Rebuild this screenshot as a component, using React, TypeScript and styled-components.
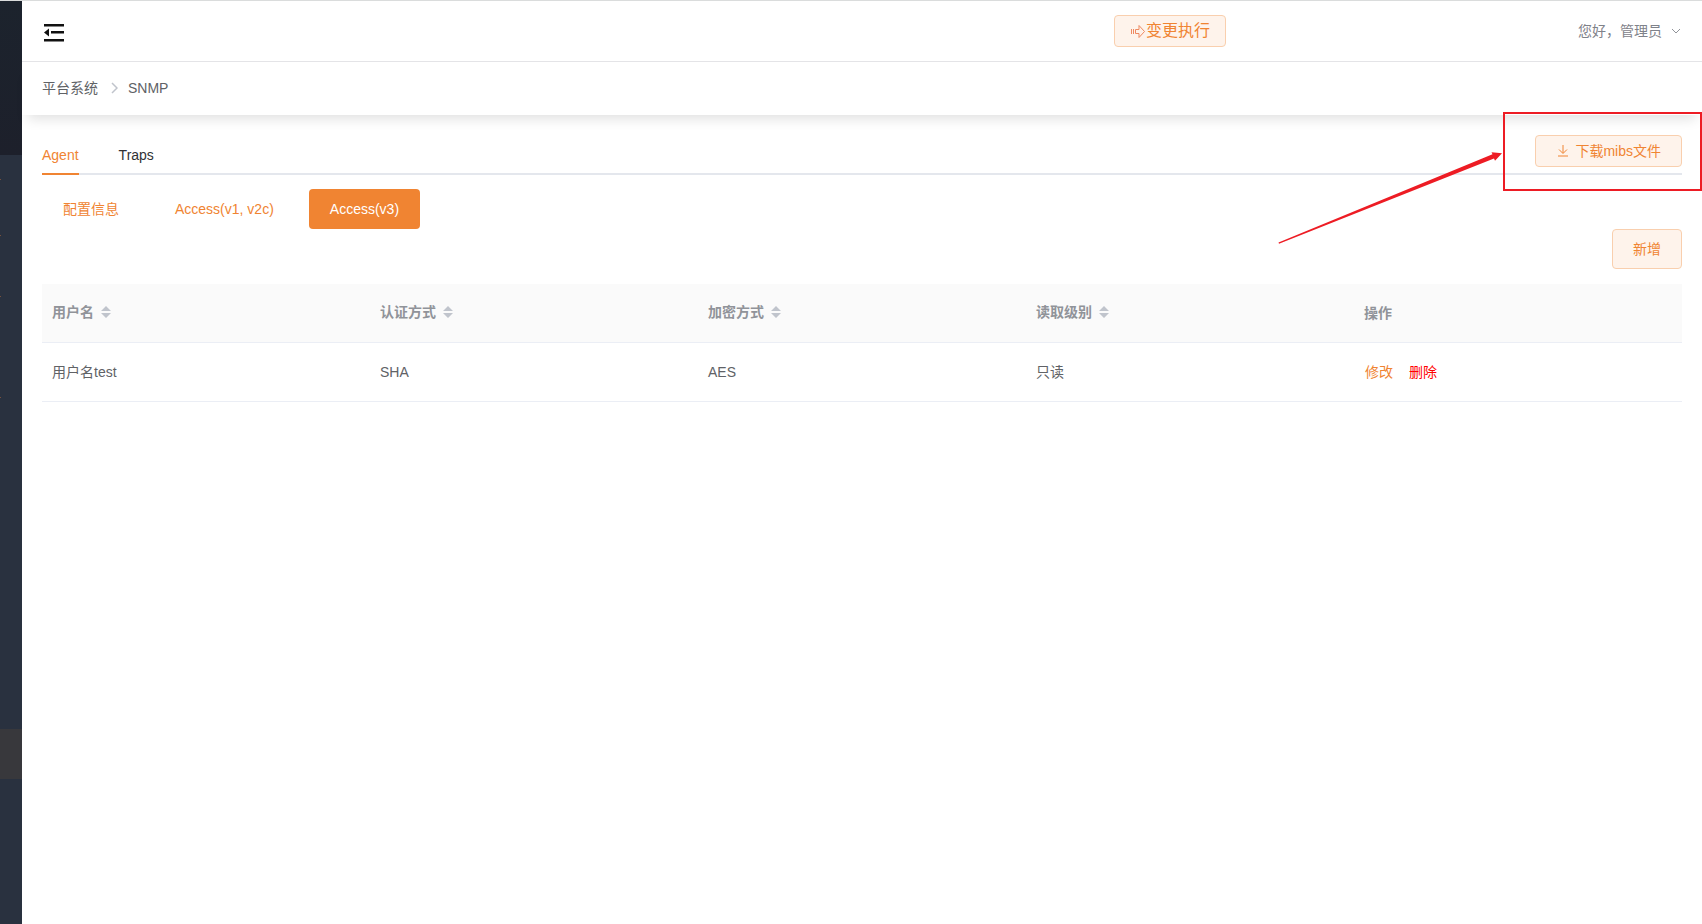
import React from 'react';
import styled, { createGlobalStyle } from 'styled-components';

const ORANGE = '#f08432';

const GlobalStyle = createGlobalStyle`
  * { box-sizing: border-box; }
  body {
    margin: 0;
    background: #fff;
    font-family: "Liberation Sans", "Noto Sans CJK SC", sans-serif;
    font-size: 14px;
    line-height: 20px;
    color: #606266;
  }
  button { font: inherit; cursor: pointer; }
  a { text-decoration: none; }
`;

const Shell = styled.div`
  display: flex;
  min-height: 100vh;
  border-top: 1px solid #dadcdc;
  overflow: hidden;
`;

const Sidebar = styled.aside`
  display: flex;
  flex-direction: column;
  flex: 0 0 22px;
  background: #29313f;
`;

const SidebarLogo = styled.div`
  height: 154px;
  background: linear-gradient(#1c232d, #1d202b);
`;

const SidebarMenu = styled.ul`
  margin: 0;
  padding: 0;
  list-style: none;
`;

const SidebarItem = styled.li<{ $height: number; $active?: boolean; $mark?: boolean }>`
  display: flex;
  align-items: center;
  height: ${(p) => p.$height}px;
  background: ${(p) => (p.$active ? '#38383c' : 'transparent')};

  &::before {
    content: '';
    width: 1px;
    height: 1px;
    background: ${(p) => (p.$mark ? '#75503d' : 'transparent')};
  }
`;

const Main = styled.main`
  flex: 1;
  min-width: 0;
`;

const TopBar = styled.header`
  display: flex;
  align-items: center;
  height: 61px;
  padding: 0 20px;
  border-bottom: 1px solid #e4e4e7;
`;

const Collapse = styled.button`
  display: flex;
  padding: 4px 0 0;
  border: 0;
  background: none;
`;

const TopAction = styled.div`
  flex: 1;
  display: flex;
  justify-content: flex-end;
`;

const TopUser = styled.div`
  flex: 0 0 456px;
  display: flex;
  justify-content: flex-end;
`;

const UserButton = styled.button`
  display: flex;
  align-items: center;
  gap: 8px;
  padding: 0;
  border: 0;
  background: none;
  color: #7f828a;
`;

const PlainButton = styled.button<{ $size?: 'small' | 'medium' | 'large' }>`
  display: inline-flex;
  align-items: center;
  justify-content: center;
  gap: ${(p) => (p.$size === 'large' ? 0 : 5)}px;
  height: ${(p) => (p.$size === 'medium' ? 40 : 32)}px;
  padding: 0 ${(p) => (p.$size === 'large' ? 15 : 20)}px;
  border: 1px solid #f9cfae;
  border-radius: 4px;
  background: #fef3eb;
  color: ${ORANGE};
  font-size: ${(p) => (p.$size === 'large' ? 16 : 14)}px;
`;

const Breadcrumb = styled.nav`
  display: flex;
  align-items: center;
  gap: 10px;
  height: 53px;
  padding: 0 20px 2px;
  box-shadow: 0 10px 12px -6px rgba(0, 0, 0, 0.12);
`;

const Crumb = styled.a`
  color: #606266;
`;

const Content = styled.section`
  padding: 20px 20px 0;
`;

const TabBar = styled.div`
  display: flex;
  align-items: flex-start;
  justify-content: space-between;
  height: 40px;
  border-bottom: 2px solid #e4e7ed;
`;

const Tabs = styled.div`
  display: flex;
  gap: 40px;
`;

const Tab = styled.button<{ $active?: boolean }>`
  height: 40px;
  padding: 2px 0 0;
  border: 0;
  border-bottom: 2px solid ${(p) => (p.$active ? ORANGE : '#e4e7ed')};
  background: none;
  color: ${(p) => (p.$active ? ORANGE : '#303133')};
`;

const Callout = styled.div`
  position: relative;
`;

const CalloutFrame = styled.div`
  position: absolute;
  top: -23px;
  left: -32px;
  right: -20px;
  height: 79px;
  border: 2px solid #ed1c24;
  pointer-events: none;
`;

const CalloutArrow = styled.svg`
  position: absolute;
  top: 12px;
  right: 100%;
  margin-right: 32px;
  pointer-events: none;
`;

const Segments = styled.div`
  display: flex;
  gap: 14px;
  padding-top: 14px;
`;

const Segment = styled.button<{ $active?: boolean }>`
  height: 40px;
  padding: 0 21px;
  border: 0;
  border-radius: 4px;
  background: ${(p) => (p.$active ? ORANGE : 'transparent')};
  color: ${(p) => (p.$active ? '#fff' : ORANGE)};
`;

const Toolbar = styled.div`
  display: flex;
  justify-content: flex-end;
  padding-bottom: 15px;
`;

const Table = styled.table`
  width: 100%;
  table-layout: fixed;
  border-collapse: separate;
  border-spacing: 0;
`;

const HeadCell = styled.th`
  height: 59px;
  padding: 0 10px;
  border-bottom: 1px solid #ebeef5;
  background: #fafafa;
  color: #909399;
  font-weight: 700;
  text-align: left;
`;

const SortButton = styled.button`
  display: flex;
  align-items: center;
  gap: 7px;
  padding: 0 0 2px;
  border: 0;
  background: none;
  color: inherit;
  font-weight: inherit;
`;

const Cell = styled.td`
  height: 59px;
  padding: 0 10px;
  border-bottom: 1px solid #ebeef5;
`;

const RowActions = styled.div`
  display: flex;
  gap: 16px;
  padding-left: 1px;
`;

const RowLink = styled.a<{ $danger?: boolean }>`
  color: ${(p) => (p.$danger ? '#ff0000' : ORANGE)};
`;

const SortIcon = () => (
  <svg width="10" height="12" viewBox="0 0 10 12" fill="#c0c4cc" aria-hidden="true">
    <path d="M0 5 5 0l5 5zM0 7h10l-5 5z" />
  </svg>
);

const menu = [
  { height: 48, mark: true },
  { height: 64, mark: true },
  { height: 58, mark: true },
  { height: 144, mark: true },
  { height: 260 },
  { height: 50, active: true },
];
const columns = ['用户名', '认证方式', '加密方式', '读取级别'];
const rows = [{ name: '用户名test', auth: 'SHA', cipher: 'AES', level: '只读' }];

export default function App() {
  return (
    <>
      <GlobalStyle />
      <Shell>
        <Sidebar>
          <SidebarLogo />
          <SidebarMenu>
            {menu.map((m, i) => (
              <SidebarItem key={i} $height={m.height} $mark={m.mark} $active={m.active} />
            ))}
          </SidebarMenu>
        </Sidebar>
        <Main>
          <TopBar>
            <Collapse aria-label="Toggle menu">
              <svg width="24" height="24" viewBox="0 0 24 24" fill="#111" aria-hidden="true">
                <path d="M2 3h20v2.400H2zM9 10h13v2.400H9zM2 18h20v2.400H2zM2 11.500l5-4v8z" />
              </svg>
            </Collapse>
            <TopAction>
              <PlainButton $size="large">
                <svg width="16" height="16" viewBox="0 0 16 16" fill="none" stroke="#ef8a62" aria-hidden="true">
                  <path d="M1.500 6v5M3.500 6v5M5.500 10.500v-4H9v-4L14.500 8.500 9 14.500v-4z" />
                </svg>
                变更执行
              </PlainButton>
            </TopAction>
            <TopUser>
              <UserButton>
                您好，管理员
                <svg width="12" height="12" viewBox="0 0 12 12" fill="none" stroke="#909399" aria-hidden="true">
                  <path d="m2 4 4 4 4-4" />
                </svg>
              </UserButton>
            </TopUser>
          </TopBar>
          <Breadcrumb aria-label="breadcrumb">
            <Crumb href="#platform">平台系统</Crumb>
            <svg width="10" height="14" viewBox="0 0 10 14" fill="none" stroke="#c0c4cc" strokeWidth="1.500" aria-hidden="true">
              <path d="m4 2 5 5-5 5" />
            </svg>
            <span>SNMP</span>
          </Breadcrumb>
          <Content>
            <TabBar>
              <Tabs role="tablist">
                <Tab role="tab" aria-selected="true" $active>Agent</Tab>
                <Tab role="tab" aria-selected="false">Traps</Tab>
              </Tabs>
              <Callout>
                <PlainButton>
                  <svg width="14" height="14" viewBox="0 0 14 14" fill="none" stroke={ORANGE} aria-hidden="true">
                    <path d="M7 1v8M3 5.500 7 9.500l4-4M2 12h10" />
                  </svg>
                  下载mibs文件
                </PlainButton>
                <CalloutFrame />
                <CalloutArrow width="226" height="100" viewBox="0 0 226 100" fill="#ed1c24" aria-hidden="true">
                  <path d="M1.500 95.500 215.500 7.300 214.500 5.300 225 6.300 218 13.700 217 11.500 2 96.800z" />
                </CalloutArrow>
              </Callout>
            </TabBar>
            <Segments>
              <Segment>配置信息</Segment>
              <Segment>Access(v1, v2c)</Segment>
              <Segment $active>Access(v3)</Segment>
            </Segments>
            <Toolbar>
              <PlainButton $size="medium">新增</PlainButton>
            </Toolbar>
            <Table>
              <thead>
                <tr>
                  {columns.map((c) => (
                    <HeadCell key={c} scope="col">
                      <SortButton>{c}<SortIcon /></SortButton>
                    </HeadCell>
                  ))}
                  <HeadCell scope="col">操作</HeadCell>
                </tr>
              </thead>
              <tbody>
                {rows.map((r) => (
                  <tr key={r.name}>
                    <Cell>{r.name}</Cell>
                    <Cell>{r.auth}</Cell>
                    <Cell>{r.cipher}</Cell>
                    <Cell>{r.level}</Cell>
                    <Cell>
                      <RowActions>
                        <RowLink href="#edit">修改</RowLink>
                        <RowLink href="#delete" $danger>删除</RowLink>
                      </RowActions>
                    </Cell>
                  </tr>
                ))}
              </tbody>
            </Table>
          </Content>
        </Main>
      </Shell>
    </>
  );
}
